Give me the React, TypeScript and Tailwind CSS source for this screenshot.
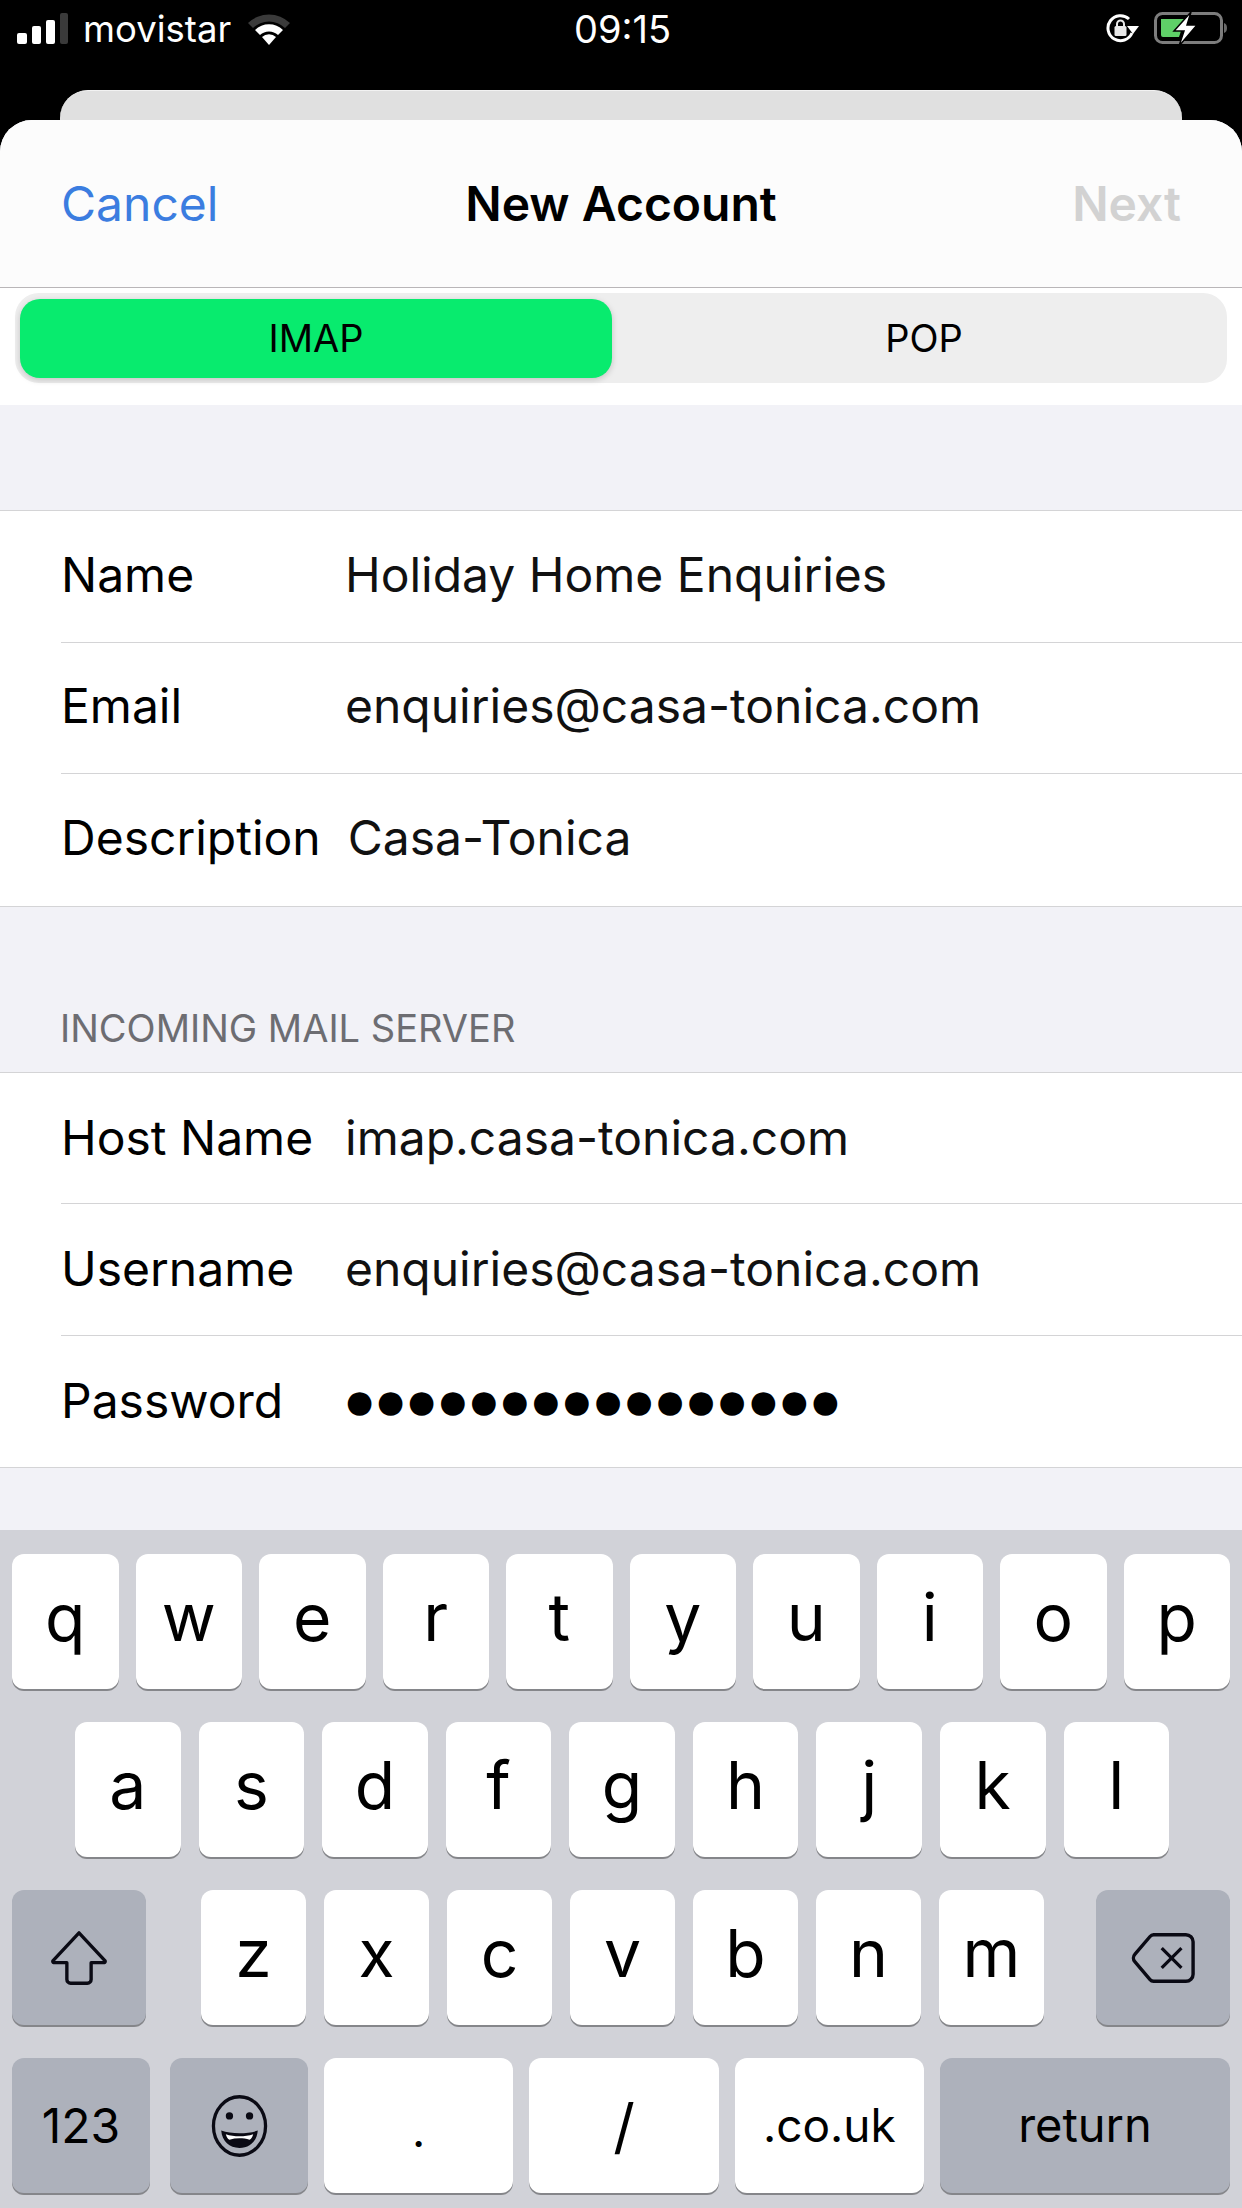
const font = { fontFamily: "Inter, 'Liberation Sans', sans-serif" };

const Signal = () => (
  <svg width="52" height="32" viewBox="0 0 52 32" className="mr-[14px]">
    <rect x="0" y="20" width="10" height="11" rx="2" fill="#fff" />
    <rect x="15" y="13" width="9" height="18" rx="2" fill="#fff" />
    <rect x="29" y="7" width="9" height="24" rx="2" fill="#fff" />
    <rect x="43" y="0" width="8" height="31" rx="2" fill="#3a3a3a" />
  </svg>
);

const Wifi = () => (
  <svg width="46" height="34" viewBox="0 0 44 34" className="ml-[15px]">
    <path d="M1 11 A30 30 0 0 1 43 11 L38 16 A23 23 0 0 0 6 16 Z" fill="#3a3a3a" />
    <path d="M8 18 A20 20 0 0 1 36 18 L31 23 A13 13 0 0 0 13 23 Z" fill="#fff" />
    <path d="M15 25 A10 10 0 0 1 29 25 L22 33 Z" fill="#fff" />
  </svg>
);

const RotationLock = () => (
  <svg width="33" height="30" viewBox="0 0 33 30" fill="none">
    <path d="M23 5 A12.5 12.5 0 1 0 26 19" stroke="#fff" strokeWidth="3" />
    <path d="M21 12 L33 12 L27 20 Z" fill="#fff" />
    <rect x="8.5" y="12" width="12" height="10" rx="1.5" fill="#e8e8e8" />
    <path d="M11 12 V10 A3.5 3.5 0 0 1 18 10 V12" stroke="#e8e8e8" strokeWidth="2" />
  </svg>
);

const Battery = () => (
  <svg width="74" height="36" viewBox="0 0 74 36" fill="none">
    <rect x="1.5" y="2.5" width="66" height="29" rx="7" stroke="#7d7d7d" strokeWidth="3" />
    <path d="M70 12 C74 13 74 21 70 22 Z" fill="#6a6a6a" />
    <path d="M7 8 H33 L22 20 H27 L25 26 H9 A2 2 0 0 1 7 24 Z" fill="#5fd068" />
    <path d="M37 1 L20 20 H30 L25 35 L43 14 H33 Z" fill="#fff" stroke="#000" strokeWidth="1.5" />
  </svg>
);

const ShiftIcon = () => (
  <svg width="58" height="56" viewBox="0 0 62 60" fill="none">
    <path
      d="M31 3 L59 33 A1.5 1.5 0 0 1 58 35 H44 V53 A4 4 0 0 1 40 57 H22 A4 4 0 0 1 18 53 V35 H4 A1.5 1.5 0 0 1 3 33 Z"
      stroke="#0a0a14"
      strokeWidth="3.6"
      strokeLinejoin="round"
    />
  </svg>
);

const BackspaceIcon = () => (
  <svg width="67" height="52" viewBox="0 0 70 58" fill="none">
    <path
      d="M24 3 H60 A8 8 0 0 1 68 11 V47 A8 8 0 0 1 60 55 H24 A6 6 0 0 1 20 53 L3 33 A6 6 0 0 1 3 25 L20 5 A6 6 0 0 1 24 3 Z"
      stroke="#0a0a14"
      strokeWidth="3.8"
    />
    <path d="M33 18 L55 40 M55 18 L33 40" stroke="#0a0a14" strokeWidth="3.6" />
  </svg>
);

const EmojiIcon = () => (
  <svg width="59" height="64" viewBox="0 0 62 70" fill="none">
    <ellipse cx="31" cy="35" rx="28.5" ry="32" stroke="#0a0a14" strokeWidth="3.6" />
    <circle cx="20" cy="24" r="4" fill="#0a0a14" />
    <circle cx="42" cy="24" r="4" fill="#0a0a14" />
    <path d="M11 40 C22 44 40 44 51 40 C50 52 42 59 31 59 C20 59 12 52 11 40 Z" fill="#0a0a14" />
    <path d="M16 44 C25 47 37 47 46 44 C45 47 44 49 42 50 C35 48 27 48 20 50 C18 49 17 47 16 44 Z" fill="#fff" />
  </svg>
);

const FormRow = ({
  label,
  value,
  last,
  dots,
  raised,
}: {
  label: string;
  value: string;
  last?: boolean;
  dots?: boolean;
  raised?: boolean;
}) => (
  <div className="pl-[61px] bg-white">
    <div
      className={`h-[131.5px] flex items-center gap-[27px] ${raised ? "pb-[3px]" : ""} ${
        last ? "" : "border-b border-[#d4d4d6]"
      }`}
    >
      <span className="min-w-[257px] text-[48px] text-black">{label}</span>
      {dots ? (
        <span
          className="ml-[1px] text-[31px] tracking-[4px] text-black"
          style={{ fontFamily: "'DejaVu Sans', sans-serif" }}
        >
          {value}
        </span>
      ) : (
        <span className="text-[48px] text-[#111]">{value}</span>
      )}
    </div>
  </div>
);

const Key = ({ children, className = "" }: { children?: React.ReactNode; className?: string }) => (
  <div
    className={`h-[135px] rounded-[12px] flex items-center justify-center text-black shadow-[0_2px_0_#85868a] ${className}`}
  >
    {children}
  </div>
);

const LetterRow = ({ letters }: { letters: string }) => (
  <>
    {letters.split("").map((l) => (
      <Key key={l} className="flex-1 bg-white text-[66px] pb-[8px]">
        {l}
      </Key>
    ))}
  </>
);

export default function App() {
  return (
    <div className="w-[1242px] h-[2208px] bg-black flex flex-col overflow-hidden" style={font}>
      {/* status bar */}
      <div className="h-[58px] pl-[17px] pr-[14px] flex items-center justify-between text-white">
        <div className="flex items-center w-[400px]">
          <Signal />
          <span className="text-[36.5px]">movistar</span>
          <Wifi />
        </div>
        <span className="text-[38px]">09:15</span>
        <div className="flex items-center justify-end gap-[15px] w-[400px]">
          <RotationLock />
          <Battery />
        </div>
      </div>
      <div className="h-[32px]" />
      <div className="h-[30px] mx-[60px] bg-[#e0e0e0] rounded-t-[28px] border-t border-[#f2f2f2]" />

      {/* sheet */}
      <div className="flex-1 flex flex-col bg-[#f2f2f7] rounded-t-[32px] overflow-hidden">
        <div className="h-[168px] shrink-0 bg-[#fcfcfc] border-b border-[#b9b6b8] flex items-center px-[61px] text-[48px]">
          <span className="flex-1 text-[#3b7de0]">Cancel</span>
          <span className="font-semibold text-black">New Account</span>
          <span className="flex-1 text-right font-semibold text-[#d2d2d2]">Next</span>
        </div>

        <div className="h-[117px] shrink-0 bg-white px-[15px] pt-[5px]">
          <div className="h-[90px] rounded-[24px] bg-[#eeeeee] flex items-center p-[5px]">
            <div className="w-[592px] h-[79px] rounded-[20px] bg-[#08eb6e] shadow-[0_2px_6px_rgba(0,0,0,0.18)] flex items-center justify-center text-[38px] text-black">
              IMAP
            </div>
            <div className="flex-1 flex items-center justify-center pl-[14px] text-[38px] text-black">POP</div>
          </div>
        </div>

        <div className="h-[105px] shrink-0" />

        <div className="border-y border-[#d4d4d6]">
          <FormRow label="Name" value="Holiday Home Enquiries" raised />
          <FormRow label="Email" value="enquiries@casa-tonica.com" raised />
          <FormRow label="Description" value="Casa-Tonica" last raised />
        </div>

        <div className="h-[165px] shrink-0 flex items-end pl-[60px] pb-[25px] text-[38px] leading-[1] text-[#6d6d72]">
          INCOMING MAIL SERVER
        </div>

        <div className="border-y border-[#d4d4d6]">
          <FormRow label="Host Name" value="imap.casa-tonica.com" />
          <FormRow label="Username" value="enquiries@casa-tonica.com" />
          <FormRow label="Password" value="●●●●●●●●●●●●●●●●" last dots />
        </div>

        <div className="flex-1" />

        {/* keyboard */}
        <div className="h-[678px] shrink-0 bg-[#d1d2d8] px-[12px] pt-[24px] flex flex-col gap-[33px]">
          <div className="flex gap-[17px]">
            <LetterRow letters="qwertyuiop" />
          </div>
          <div className="flex gap-[18px] pl-[63px] pr-[61px]">
            <LetterRow letters="asdfghjkl" />
          </div>
          <div className="flex items-center">
            <Key className="w-[134px] bg-[#adb1bb]">
              <ShiftIcon />
            </Key>
            <div className="flex-1 flex gap-[18px] pl-[55px] pr-[52px]">
              <LetterRow letters="zxcvbnm" />
            </div>
            <Key className="w-[134px] bg-[#adb1bb]">
              <BackspaceIcon />
            </Key>
          </div>
          <div className="flex gap-[16px]">
            <Key className="w-[138px] bg-[#adb1bb] text-[48px]">123</Key>
            <Key className="w-[138px] ml-[4px] bg-[#adb1bb]">
              <EmojiIcon />
            </Key>
            <Key className="flex-1 bg-white text-[46px] pt-[10px]">.</Key>
            <Key className="flex-1 bg-white text-[60px]">/</Key>
            <Key className="flex-1 bg-white text-[46px]">.co.uk</Key>
            <Key className="w-[290px] bg-[#adb1bb] text-[47px]">return</Key>
          </div>
        </div>
      </div>
    </div>
  );
}
